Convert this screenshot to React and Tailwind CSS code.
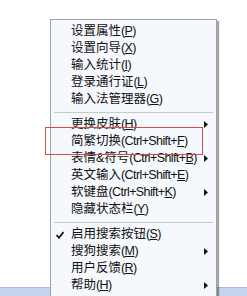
import React from 'react';

const items = [
  { label: '设置属性', key: 'P' },
  { label: '设置向导', key: 'X' },
  { label: '输入统计', key: 'I' },
  { label: '登录通行证', key: 'L' },
  { label: '输入法管理器', key: 'G' },
  { sep: true },
  { label: '更换皮肤', key: 'H', sub: true },
  { label: '简繁切换', key: 'F', combo: 'Ctrl+Shift+' },
  { label: '表情&符号', key: 'B', combo: 'Ctrl+Shift+', sub: true },
  { label: '英文输入', key: 'E', combo: 'Ctrl+Shift+' },
  { label: '软键盘', key: 'K', combo: 'Ctrl+Shift+', sub: true },
  { label: '隐藏状态栏', key: 'Y' },
  { sep: true },
  { label: '启用搜索按钮', key: 'S', checked: true },
  { label: '搜狗搜索', key: 'M', sub: true },
  { label: '用户反馈', key: 'R' },
  { label: '帮助', key: 'H', sub: true },
];

const MenuRow = ({ item }) => (
  <div className="relative flex items-center h-[17px] pl-[20px] pr-[12px]">
    {item.checked && (
      <svg className="absolute left-[5px] top-[5px]" width="8" height="8" viewBox="0 0 8 8">
        <path d="M0.5 4 L3 6.8 L7.5 1" fill="none" stroke="#111" strokeWidth="1.7" />
      </svg>
    )}
    <span className="whitespace-nowrap">
      {item.label}
      <span className="tracking-[-0.6px]">
        ({item.combo}<span className="underline underline-offset-1">{item.key}</span>)
      </span>
    </span>
    {item.sub && (
      <svg className="absolute right-[8px] top-[5px]" width="4" height="7" viewBox="0 0 4 7">
        <path d="M0 0 L4 3.5 L0 7 Z" fill="#111" />
      </svg>
    )}
  </div>
);

export default function App() {
  return (
    <div className="relative w-[247px] h-[296px] overflow-hidden bg-white">
      {/* taskbar strip */}
      <div className="absolute left-0 right-0 bottom-0 h-[9px] bg-[#c3d4ec] border-t border-[#a8bde0]" />

      {/* context menu */}
      <div className="absolute left-[50px] top-[19px] w-[167px] bg-[#f5f8fc] border border-[#a2a2a2] shadow-[2px_2px_1px_rgba(0,0,0,0.35)] pt-[3px] pb-[3px] text-[12.5px] text-[#111] leading-none font-['Liberation_Sans','Noto_Sans_CJK_SC',sans-serif]">
        {items.map((item, i) =>
          item.sep ? (
            <div key={i} className="h-[8px] flex items-center px-[3px]">
              <div className="w-full h-px bg-[#c8c8c8]" />
            </div>
          ) : (
            <MenuRow key={i} item={item} />
          )
        )}
      </div>

      {/* red annotation box */}
      <div className="absolute left-[45px] top-[127px] w-[158px] h-[28px] border border-[#d24a4a]" />
    </div>
  );
}
